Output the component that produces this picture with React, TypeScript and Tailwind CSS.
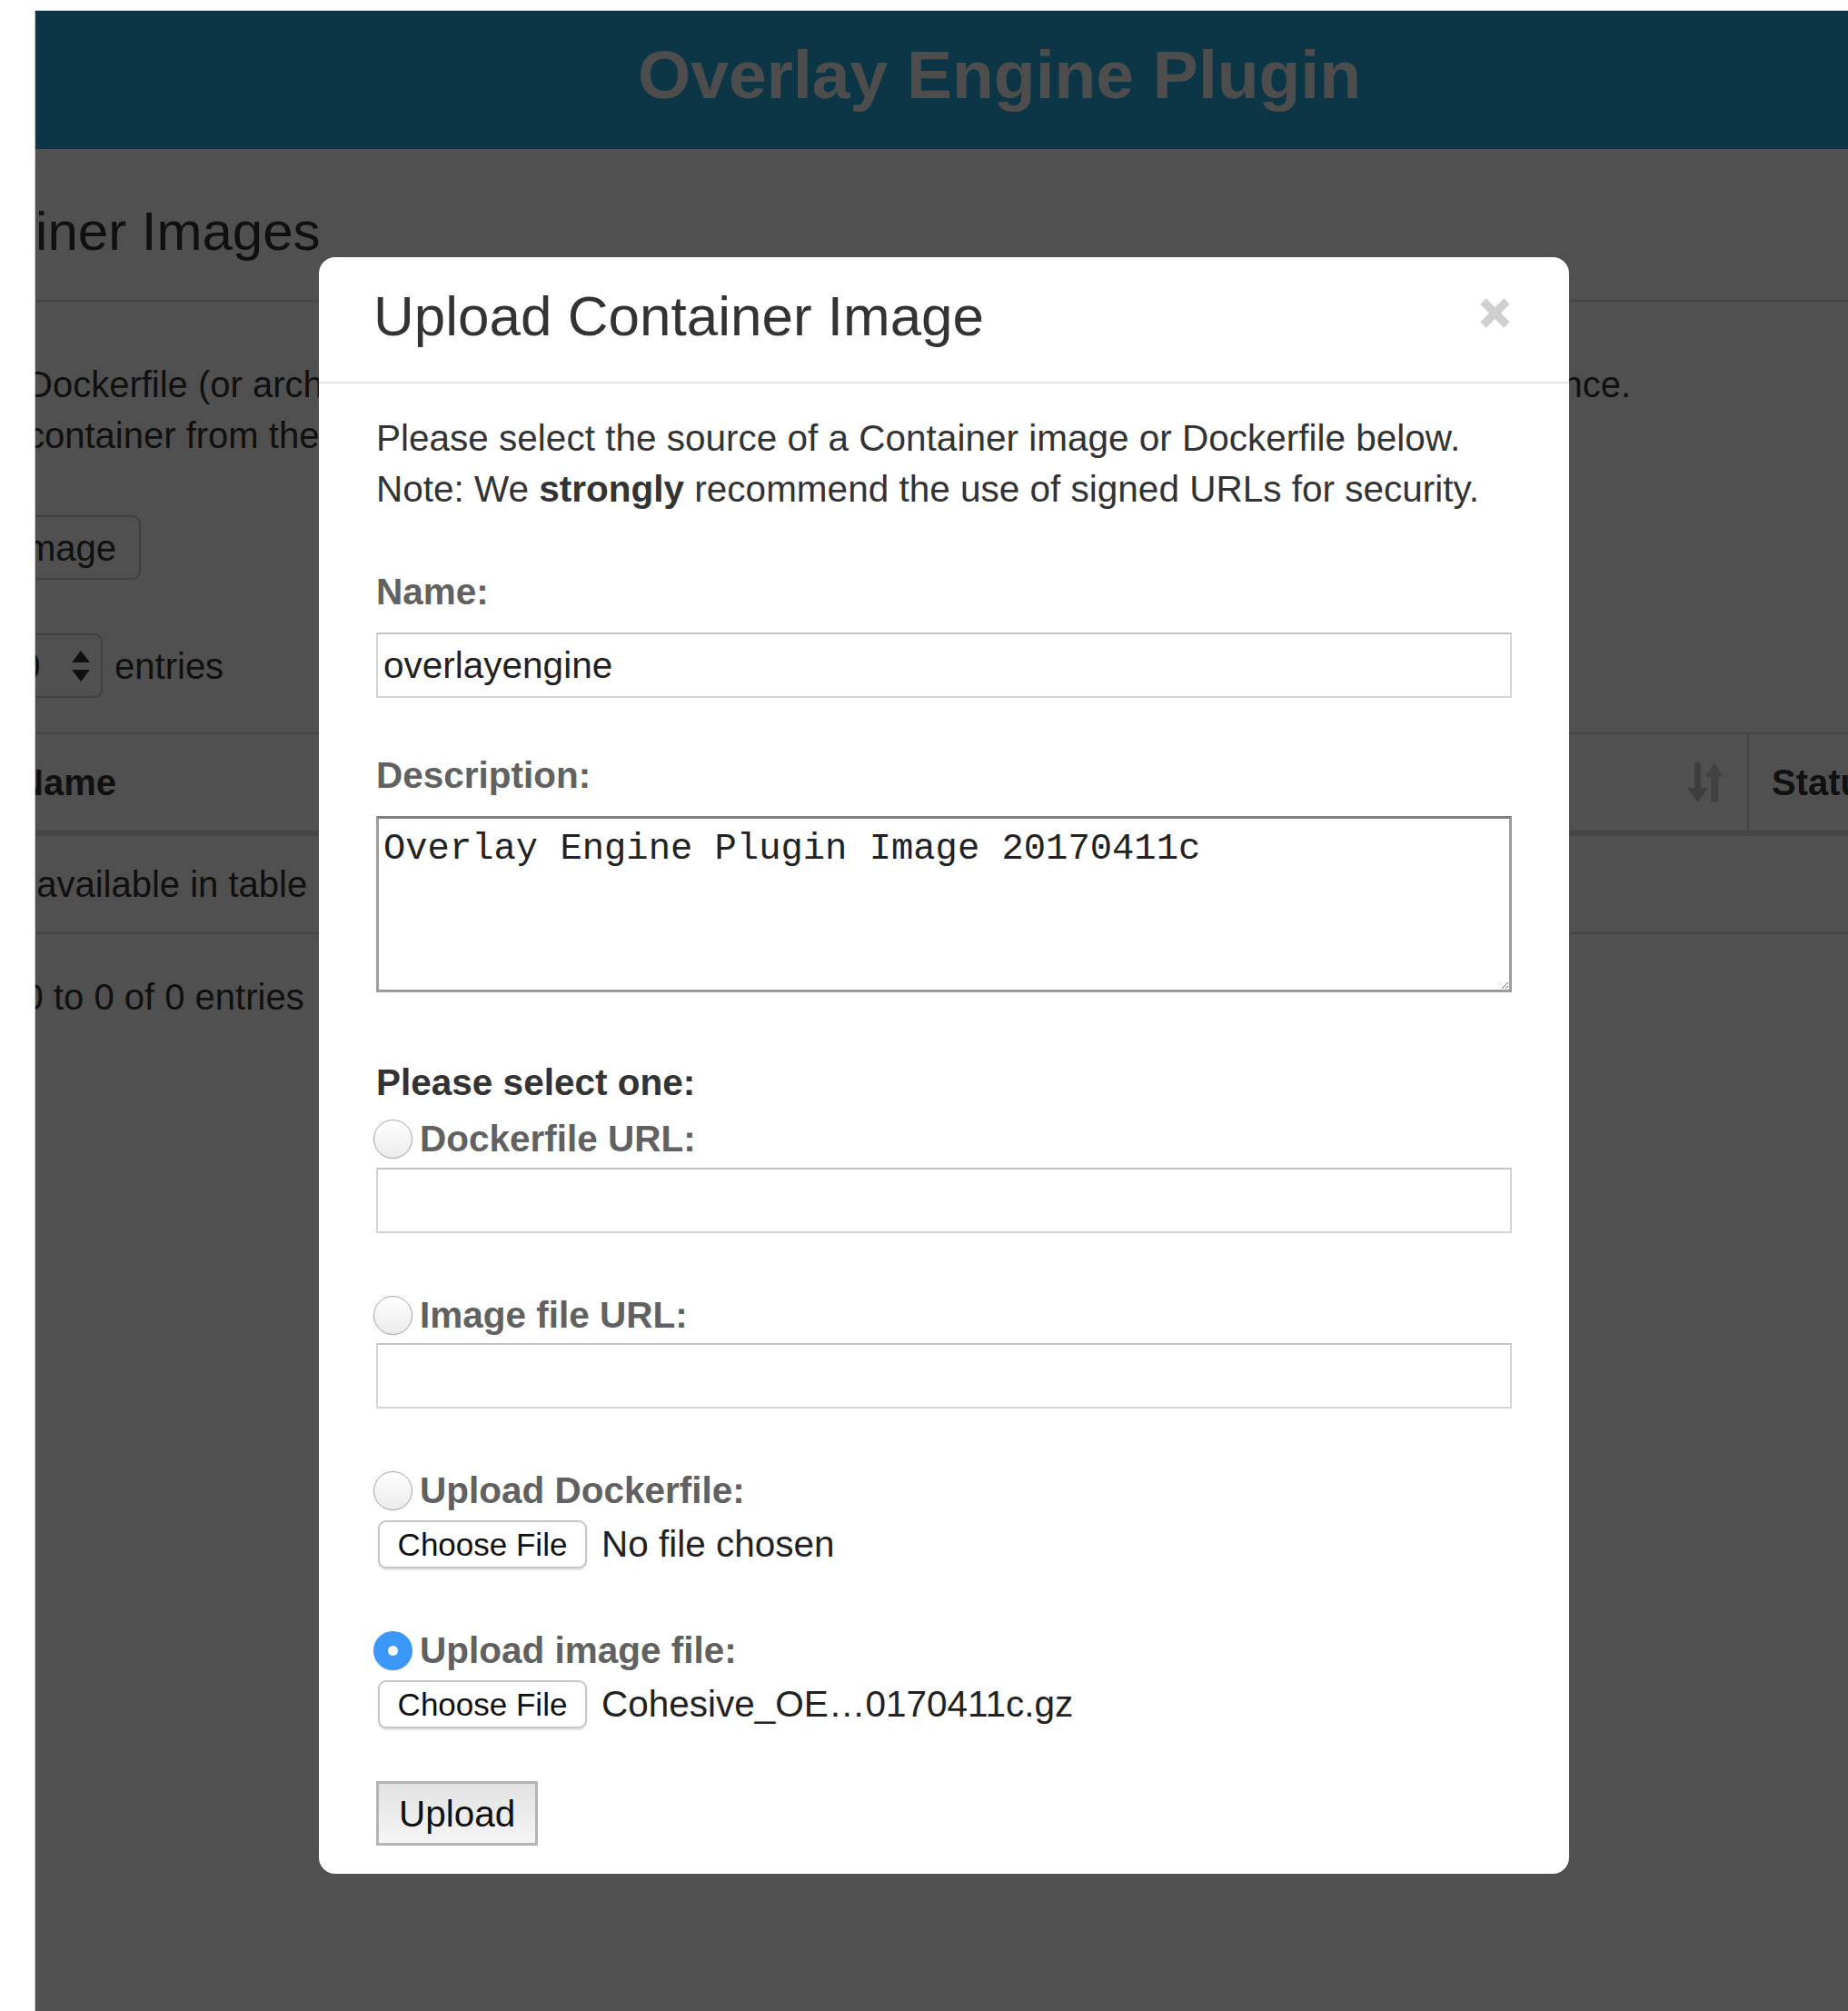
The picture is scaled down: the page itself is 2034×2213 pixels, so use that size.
import { useState } from 'react';

type Source = 'dockerfileUrl' | 'imageUrl' | 'dockerfileUpload' | 'imageUpload';

const SortBothIcon = () => (
  <svg width="40" height="44" viewBox="0 0 40 44" className="shrink-0">
    <rect x="8" y="0" width="7" height="30" fill="#c4c4c4" />
    <polygon points="0,28 23,28 11.5,44" fill="#c4c4c4" />
    <polygon points="20,16 40,16 30,0" fill="#d2d2d2" />
    <rect x="26" y="14" width="8" height="30" fill="#d2d2d2" />
  </svg>
);

const SelectArrows = () => (
  <svg width="20" height="36" viewBox="0 0 20 36">
    <polygon points="0,14 20,14 10,1" fill="#333" />
    <polygon points="0,22 20,22 10,35" fill="#333" />
  </svg>
);

const CloseIcon = () => (
  <svg width="33" height="33" viewBox="0 0 33 33">
    <path d="M3.5 3.5 L29.5 29.5 M29.5 3.5 L3.5 29.5" stroke="#cfcfcf" strokeWidth="9" />
  </svg>
);

// page behind the dialog, scrolled a little to the right
const ImagesPage = () => (
  <div className="w-[2122px] text-[40px] leading-[56px] text-[#333]">
    <header className="h-[152px] bg-[#29a9dc] text-center">
      <h1 className="text-[75px] font-bold leading-[140px] text-[#f5f5f5]">Overlay Engine Plugin</h1>
    </header>

    <h2 className="ml-[-160px] mt-[56px] whitespace-nowrap text-[60px] leading-[70px]">Container Images</h2>
    <div className="mt-[40px] border-t-2 border-[#dddddd]" />

    <div className="ml-[-10px] mt-[63px] whitespace-nowrap">
      <div className="flex w-[1766px] justify-between">
        <span>Dockerfile (or archive) or a saved image file</span>
        <span>to load into this Overlay Engine instance.</span>
      </div>
      <div>container from the image file of your choice.</div>
    </div>

    <button
      type="button"
      className="ml-[-187px] mt-[60px] flex h-[71px] items-center whitespace-nowrap rounded-[9px] border-2 border-[#cccccc] px-[25px]"
    >
      Upload Image
    </button>

    <div className="ml-[-172px] mt-[59px] flex h-[71px] items-center gap-[13px]">
      <span>Show</span>
      <div className="flex h-[71px] w-[133px] items-center justify-between rounded-[9px] border-2 border-[#cccccc] pl-[18px] pr-[12px]">
        <span>10</span>
        <SelectArrows />
      </div>
      <span>entries</span>
    </div>

    <div className="ml-[-48px] mt-[38px] w-[2300px] border-t-2 border-[#dddddd]">
      <div className="flex h-[112px] border-b-[6px] border-[#dddddd] font-bold">
        <div className="flex w-[1932px] items-center justify-between pl-[28px] pr-[26px]">
          <span>Name</span>
          <SortBothIcon />
        </div>
        <div className="flex items-center border-l-2 border-[#dddddd] pl-[25px]">Status</div>
      </div>
      <div className="flex h-[108px] items-center border-b-2 border-[#dddddd]">
        <span className="ml-[-102px] whitespace-nowrap">No data available in table</span>
      </div>
    </div>

    <div className="ml-[-178px] mt-[41px] whitespace-nowrap">Showing 0 to 0 of 0 entries</div>
  </div>
);

const SourceOption = ({
  id,
  label,
  checked,
  onSelect,
}: {
  id: string;
  label: string;
  checked: boolean;
  onSelect: () => void;
}) => (
  <label htmlFor={id} className="flex h-[56px] items-center gap-[8px] font-bold text-[#616161]">
    <input
      id={id}
      type="radio"
      name="source"
      checked={checked}
      onChange={onSelect}
      className="ml-[-3px] h-[43px] w-[43px] shrink-0 appearance-none rounded-full border-[1.5px] border-[#a4a4a4] bg-linear-to-b from-white to-[#ebebeb] shadow-[0_1px_1px_rgba(0,0,0,0.08)] checked:border-[16px] checked:border-[#3b97f9] checked:from-white checked:to-white"
    />
    {label}
  </label>
);

const FilePicker = ({ fileName }: { fileName?: string }) => (
  <div className="mt-[3px] flex items-center gap-[16px]">
    <button
      type="button"
      className="ml-[2px] h-[53px] w-[230px] rounded-[9px] border-2 border-[#c6c6c6] bg-white text-[35px] leading-none text-[#111] shadow-[0_2px_2px_rgba(0,0,0,0.12)]"
    >
      Choose File
    </button>
    <span className="text-[#222]">{fileName ?? 'No file chosen'}</span>
  </div>
);

const UploadDialog = () => {
  const [source, setSource] = useState<Source>('imageUpload');

  return (
    <div className="absolute left-[312px] top-[271px] w-[1376px] rounded-[18px] bg-white text-[40.5px] leading-[56px] text-[#333]">
      <div className="relative border-b-2 border-[#e5e5e5] px-[60px] pb-[38px] pt-[31px]">
        <h4 className="text-[62px] leading-[68px]">Upload Container Image</h4>
        <button type="button" className="absolute right-[65px] top-[45px]">
          <CloseIcon />
        </button>
      </div>

      <form className="px-[63px] pb-[31px] pt-[32px]" onSubmit={(event) => event.preventDefault()}>
        <p>
          Please select the source of a Container image or Dockerfile below.
          <br />
          Note: We <strong>strongly</strong> recommend the use of signed URLs for security.
        </p>

        <label htmlFor="image-name" className="mt-[57px] block font-bold text-[#616161]">
          Name:
        </label>
        <input
          id="image-name"
          type="text"
          defaultValue="overlayengine"
          className="mt-[17px] block h-[72px] w-full border-2 border-[#d4d4d4] border-t-[#c4c4c4] px-[6px] text-[#222] outline-none"
        />

        <label htmlFor="image-description" className="mt-[57px] block font-bold text-[#616161]">
          Description:
        </label>
        <textarea
          id="image-description"
          defaultValue="Overlay Engine Plugin Image 20170411c"
          className="mt-[17px] block h-[194px] w-full border-[3px] border-[#9c9c9c] border-t-[#808080] px-[5px] pb-[5px] pt-[3px] font-['Liberation_Mono','Courier_New',monospace] text-[40.5px] leading-normal text-[#222] outline-none"
        />

        <div className="mt-[71px] font-bold">Please select one:</div>

        <div className="mt-[6px]">
          <SourceOption
            id="src-dockerfile-url"
            label="Dockerfile URL:"
            checked={source === 'dockerfileUrl'}
            onSelect={() => setSource('dockerfileUrl')}
          />
          <input type="url" className="mt-[4px] block h-[72px] w-full border-2 border-[#d4d4d4] border-t-[#c4c4c4] px-[6px] outline-none" />
        </div>

        <div className="mt-[62px]">
          <SourceOption
            id="src-image-url"
            label="Image file URL:"
            checked={source === 'imageUrl'}
            onSelect={() => setSource('imageUrl')}
          />
          <input type="url" className="mt-[3px] block h-[72px] w-full border-2 border-[#d4d4d4] border-t-[#c4c4c4] px-[6px] outline-none" />
        </div>

        <div className="mt-[62px]">
          <SourceOption
            id="src-dockerfile-upload"
            label="Upload Dockerfile:"
            checked={source === 'dockerfileUpload'}
            onSelect={() => setSource('dockerfileUpload')}
          />
          <FilePicker />
        </div>

        <div className="mt-[61px]">
          <SourceOption
            id="src-image-upload"
            label="Upload image file:"
            checked={source === 'imageUpload'}
            onSelect={() => setSource('imageUpload')}
          />
          <FilePicker fileName="Cohesive_OE…0170411c.gz" />
        </div>

        <button
          type="submit"
          className="mt-[57px] h-[71px] border-[3px] border-[#b4b4b4] bg-linear-to-b from-[#e2e2e2] to-[#f5f5f5] px-[22px] text-[#111]"
        >
          Upload
        </button>
      </form>
    </div>
  );
};

export default function App() {
  return (
    <div className="h-[2213px] w-[2034px] overflow-hidden bg-white pl-[38px] pt-[11px] font-['Liberation_Sans','Helvetica_Neue',Arial,sans-serif]">
      <div className="relative h-[2202px] overflow-hidden border-l border-t border-[#c8c8c8]">
        <ImagesPage />
        <div className="absolute inset-0 bg-[rgba(0,0,0,0.685)]" />
        <UploadDialog />
      </div>
    </div>
  );
}
